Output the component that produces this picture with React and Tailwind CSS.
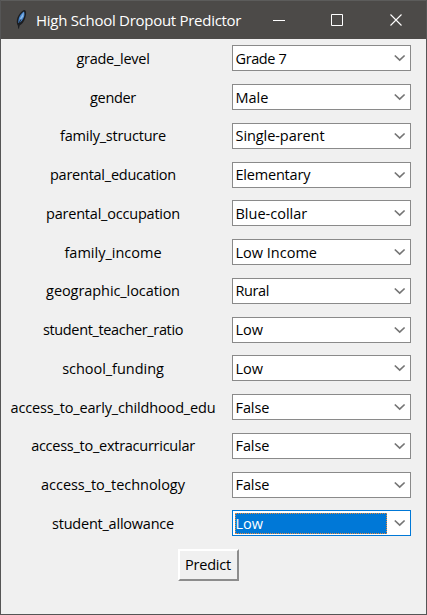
const fields = [
  { label: "grade_level", value: "Grade 7", track: "tracking-[-0.27px]", valueTrack: "tracking-[-0.4px]" },
  { label: "gender", value: "Male", track: "tracking-[-0.32px]", valueTrack: "tracking-normal" },
  { label: "family_structure", value: "Single-parent", track: "tracking-[-0.2px]", valueTrack: "tracking-[-0.07px]" },
  { label: "parental_education", value: "Elementary", track: "tracking-[-0.25px]", valueTrack: "tracking-[-0.2px]" },
  { label: "parental_occupation", value: "Blue-collar", track: "tracking-[-0.21px]", valueTrack: "tracking-normal" },
  { label: "family_income", value: "Low Income", track: "tracking-normal", valueTrack: "tracking-normal" },
  { label: "geographic_location", value: "Rural", track: "tracking-[-0.07px]", valueTrack: "tracking-[-0.4px]" },
  { label: "student_teacher_ratio", value: "Low", track: "tracking-[-0.35px]", valueTrack: "tracking-normal" },
  { label: "school_funding", value: "Low", track: "tracking-[-0.03px]", valueTrack: "tracking-normal" },
  { label: "access_to_early_childhood_edu", value: "False", track: "tracking-[-0.15px]", valueTrack: "tracking-[-0.1px]" },
  { label: "access_to_extracurricular", value: "False", track: "tracking-[-0.26px]", valueTrack: "tracking-[-0.1px]" },
  { label: "access_to_technology", value: "False", track: "tracking-[-0.05px]", valueTrack: "tracking-[-0.1px]" },
  { label: "student_allowance", value: "Low", track: "tracking-[-0.23px]", valueTrack: "tracking-normal", focused: true },
];

function Feather() {
  return (
    <svg width="12" height="22" viewBox="0 0 12 22" fill="none">
      <path d="M3.500 20 2.800 16.500C.3 12.500 2.500 5 8.500 1.200c3-1 3.200 3.500 1.800 7.500C9 13 6.500 15.500 4.500 16.500Z" fill="#1b1d21" />
      <path d="M3.400 14C3 9.500 5 5 9 2.500c1.500 3.500-.6 8.500-4.600 11.500Z" fill="#4483cb" />
      <path d="M5 9.500 8.700 3 8.300 7.500 5.500 11Z" fill="#8ab8e6" />
      <path d="M3.600 19.500 4.200 14 5.800 10.500" stroke="#1b1d21" strokeWidth=".9" />
    </svg>
  );
}

function TitleBar() {
  return (
    <header className="flex h-[39px] shrink-0 items-center border-t border-[#5c5c5b] bg-[#4c4a48] pl-[14px] text-white">
      <Feather />
      <h1 className="ml-[9px] w-[212px] whitespace-nowrap text-[15px] leading-5 tracking-[-0.28px]">
        High School Dropout Predictor
      </h1>
      <svg className="ml-[24px]" width="14" height="14" viewBox="0 0 14 14" stroke="currentColor">
        <path d="M1 7.500h12" />
      </svg>
      <svg className="ml-[44px]" width="14" height="14" viewBox="0 0 14 14" stroke="currentColor" fill="none">
        <path d="M1.500 1.500h11v11h-11z" />
      </svg>
      <svg className="ml-[45px]" width="14" height="14" viewBox="0 0 14 14" stroke="currentColor" fill="none">
        <path d="m1.500 1.500 11 11m0-11-11 11" strokeWidth="1.100" />
      </svg>
    </header>
  );
}

function Combo({ value, valueTrack, focused }) {
  return (
    <div
      className={
        "flex h-[26px] w-[179px] items-center border bg-white " +
        (focused ? "border-[#0078d7] text-white" : "border-[#8a8a8a] text-black")
      }
    >
      <div
        className={
          "ml-[1.5px] flex h-[21px] w-[152.5px] items-center pt-[1px] pl-px " +
          (focused ? "bg-[#0078d7] outline-1 -outline-offset-1 outline-dotted outline-[#e58a3c]" : "")
        }
      >
        <span className={"whitespace-nowrap leading-5 " + valueTrack}>{value}</span>
      </div>
      <svg className="ml-[7px]" width="12" height="8" viewBox="0 0 12 8" fill="none" stroke="#757575">
        <path d="m.8 1.500 4.900 4.600 4.900-4.600" strokeWidth="1.700" />
      </svg>
    </div>
  );
}

export default function App() {
  return (
    <div className="flex h-[615px] w-[427px] flex-col overflow-hidden border-x border-b border-[#555] bg-[#f0f0f0] font-['Open_Sans','Noto_Sans',sans-serif] text-[14.5px] text-black">
      <TitleBar />
      <main className="flex flex-col">
        {fields.map((f) => (
          <div key={f.label} className="flex h-[38.75px] items-center">
            <div className="flex w-[224px] justify-center pt-[1px]">
              <span className={"whitespace-nowrap leading-5 " + f.track}>{f.label}</span>
            </div>
            <div className="ml-[7px]">
              <Combo value={f.value} valueTrack={f.valueTrack} focused={f.focused} />
            </div>
          </div>
        ))}
        <button className="mt-[6px] ml-[177px] flex h-[32.5px] w-[61px] items-center justify-center border-2 border-t-white border-r-[#8c8c8c] border-b-[#8c8c8c] border-l-white bg-[#f0f0f0] leading-5 tracking-[-0.2px]">
          <span className="-ml-px whitespace-nowrap">Predict</span>
        </button>
      </main>
    </div>
  );
}
